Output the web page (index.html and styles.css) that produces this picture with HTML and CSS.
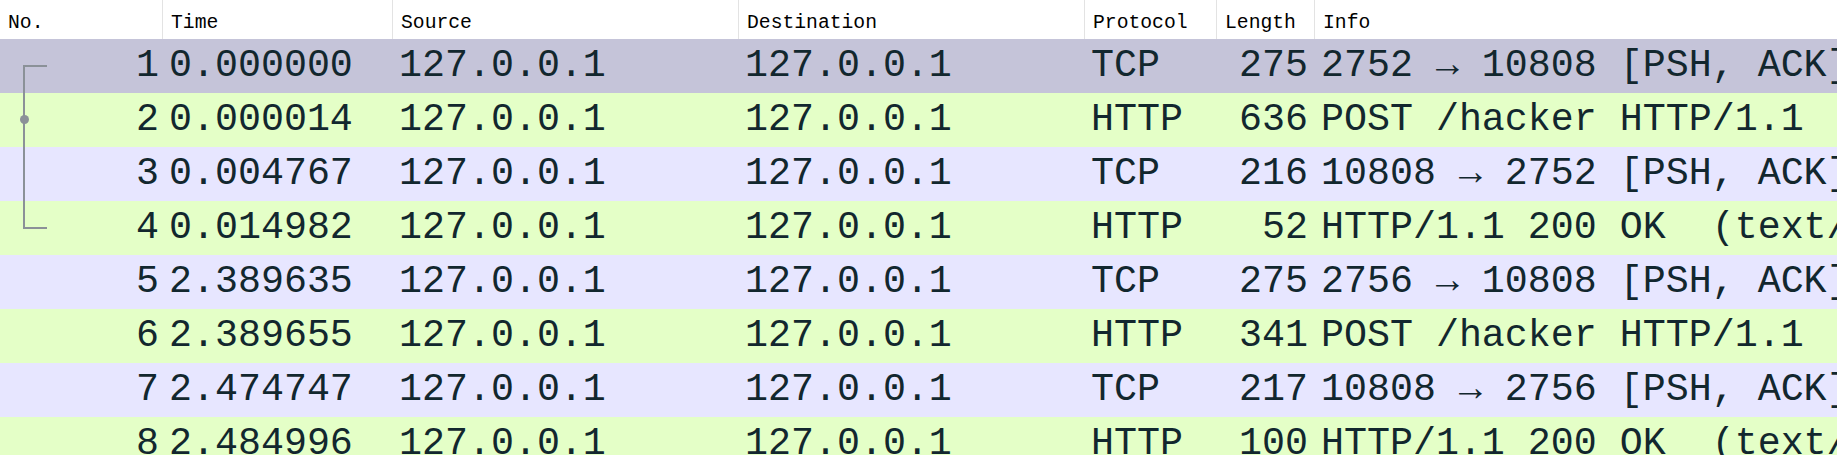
FILE: index.html
```html
<!DOCTYPE html>
<html>
<head>
<meta charset="utf-8">
<link rel="stylesheet" href="styles.css">
</head>
<body>
<div class="packets">
  <div class="row head">
    <div class="hc">No.</div>
    <div class="hc sep">Time</div>
    <div class="hc sep">Source</div>
    <div class="hc sep">Destination</div>
    <div class="hc sep">Protocol</div>
    <div class="hc sep">Length</div>
    <div class="hc sep">Info</div>
  </div>

  <div class="row pkt selected">
    <div class="c no"><span class="tree first"></span>1</div>
    <div class="c">0.000000</div>
    <div class="c">127.0.0.1</div>
    <div class="c">127.0.0.1</div>
    <div class="c">TCP</div>
    <div class="c len">275</div>
    <div class="c info">2752 → 10808 [PSH, ACK] Seq=1 Ack=1 Win=2619648 Len=221</div>
  </div>
  <div class="row pkt http">
    <div class="c no"><span class="tree mid"></span><span class="tree-dot"></span>2</div>
    <div class="c">0.000014</div>
    <div class="c">127.0.0.1</div>
    <div class="c">127.0.0.1</div>
    <div class="c">HTTP</div>
    <div class="c len">636</div>
    <div class="c info">POST /hacker HTTP/1.1  (application/x-www-form-urlencoded)</div>
  </div>
  <div class="row pkt tcp">
    <div class="c no"><span class="tree mid"></span>3</div>
    <div class="c">0.004767</div>
    <div class="c">127.0.0.1</div>
    <div class="c">127.0.0.1</div>
    <div class="c">TCP</div>
    <div class="c len">216</div>
    <div class="c info">10808 → 2752 [PSH, ACK] Seq=1 Ack=803 Win=2619648 Len=162</div>
  </div>
  <div class="row pkt http">
    <div class="c no"><span class="tree last"></span>4</div>
    <div class="c">0.014982</div>
    <div class="c">127.0.0.1</div>
    <div class="c">127.0.0.1</div>
    <div class="c">HTTP</div>
    <div class="c len">52</div>
    <div class="c info">HTTP/1.1 200 OK  (text/html)</div>
  </div>
  <div class="row pkt tcp">
    <div class="c no">5</div>
    <div class="c">2.389635</div>
    <div class="c">127.0.0.1</div>
    <div class="c">127.0.0.1</div>
    <div class="c">TCP</div>
    <div class="c len">275</div>
    <div class="c info">2756 → 10808 [PSH, ACK] Seq=1 Ack=1 Win=2619648 Len=221</div>
  </div>
  <div class="row pkt http">
    <div class="c no">6</div>
    <div class="c">2.389655</div>
    <div class="c">127.0.0.1</div>
    <div class="c">127.0.0.1</div>
    <div class="c">HTTP</div>
    <div class="c len">341</div>
    <div class="c info">POST /hacker HTTP/1.1  (application/x-www-form-urlencoded)</div>
  </div>
  <div class="row pkt tcp">
    <div class="c no">7</div>
    <div class="c">2.474747</div>
    <div class="c">127.0.0.1</div>
    <div class="c">127.0.0.1</div>
    <div class="c">TCP</div>
    <div class="c len">217</div>
    <div class="c info">10808 → 2756 [PSH, ACK] Seq=1 Ack=508 Win=2619648 Len=163</div>
  </div>
  <div class="row pkt http">
    <div class="c no">8</div>
    <div class="c">2.484996</div>
    <div class="c">127.0.0.1</div>
    <div class="c">127.0.0.1</div>
    <div class="c">HTTP</div>
    <div class="c len">100</div>
    <div class="c info">HTTP/1.1 200 OK  (text/html)</div>
  </div>
</div>
</body>
</html>
```

FILE: styles.css
```css
html, body {
  margin: 0;
  padding: 0;
  overflow: hidden;
  background: #ffffff;
}

.packets {
  width: 1837px;
  overflow: hidden;
}

.row {
  display: grid;
  grid-template-columns: 162px 230px 346px 346px 132px 98px 1fr;
}

.head {
  height: 39px;
  background: #ffffff;
}

.hc {
  font-family: "Liberation Mono", monospace;
  font-size: 19.7px;
  line-height: 31px;
  padding: 8px 0 0 8px;
  color: #000000;
  white-space: nowrap;
  overflow: hidden;
}

.hc.sep {
  border-left: 1px solid #e3e3e3;
}

.pkt {
  height: 54px;
}

.selected { background: #c5c4d9; }
.tcp { background: #e7e6ff; }
.http { background: #e4ffc7; }

.c {
  position: relative;
  font-family: "Liberation Mono", "DejaVu Sans Mono", monospace;
  font-size: 38.3px;
  line-height: 54px;
  color: #12272e;
  padding: 0 0 0 7px;
  white-space: pre;
  overflow: hidden;
}

.c.no {
  text-align: right;
  padding: 0 3px 0 0;
}

.c.len {
  text-align: right;
  padding: 0 6px 0 0;
}

.c.info {
  overflow: visible;
}

.tree {
  position: absolute;
  left: 23px;
  width: 24px;
  border-left: 2px solid #8b9198;
  box-sizing: border-box;
}

.tree.first {
  top: 26px;
  bottom: 0;
  border-top: 2px solid #8b9198;
}

.tree.mid {
  top: 0;
  bottom: 0;
  width: 2px;
}

.tree.last {
  top: 0;
  height: 28px;
  border-bottom: 2px solid #8b9198;
}

.tree-dot {
  position: absolute;
  left: 19.5px;
  top: 21.5px;
  width: 9px;
  height: 9px;
  border-radius: 50%;
  background: #8b9198;
}
```
